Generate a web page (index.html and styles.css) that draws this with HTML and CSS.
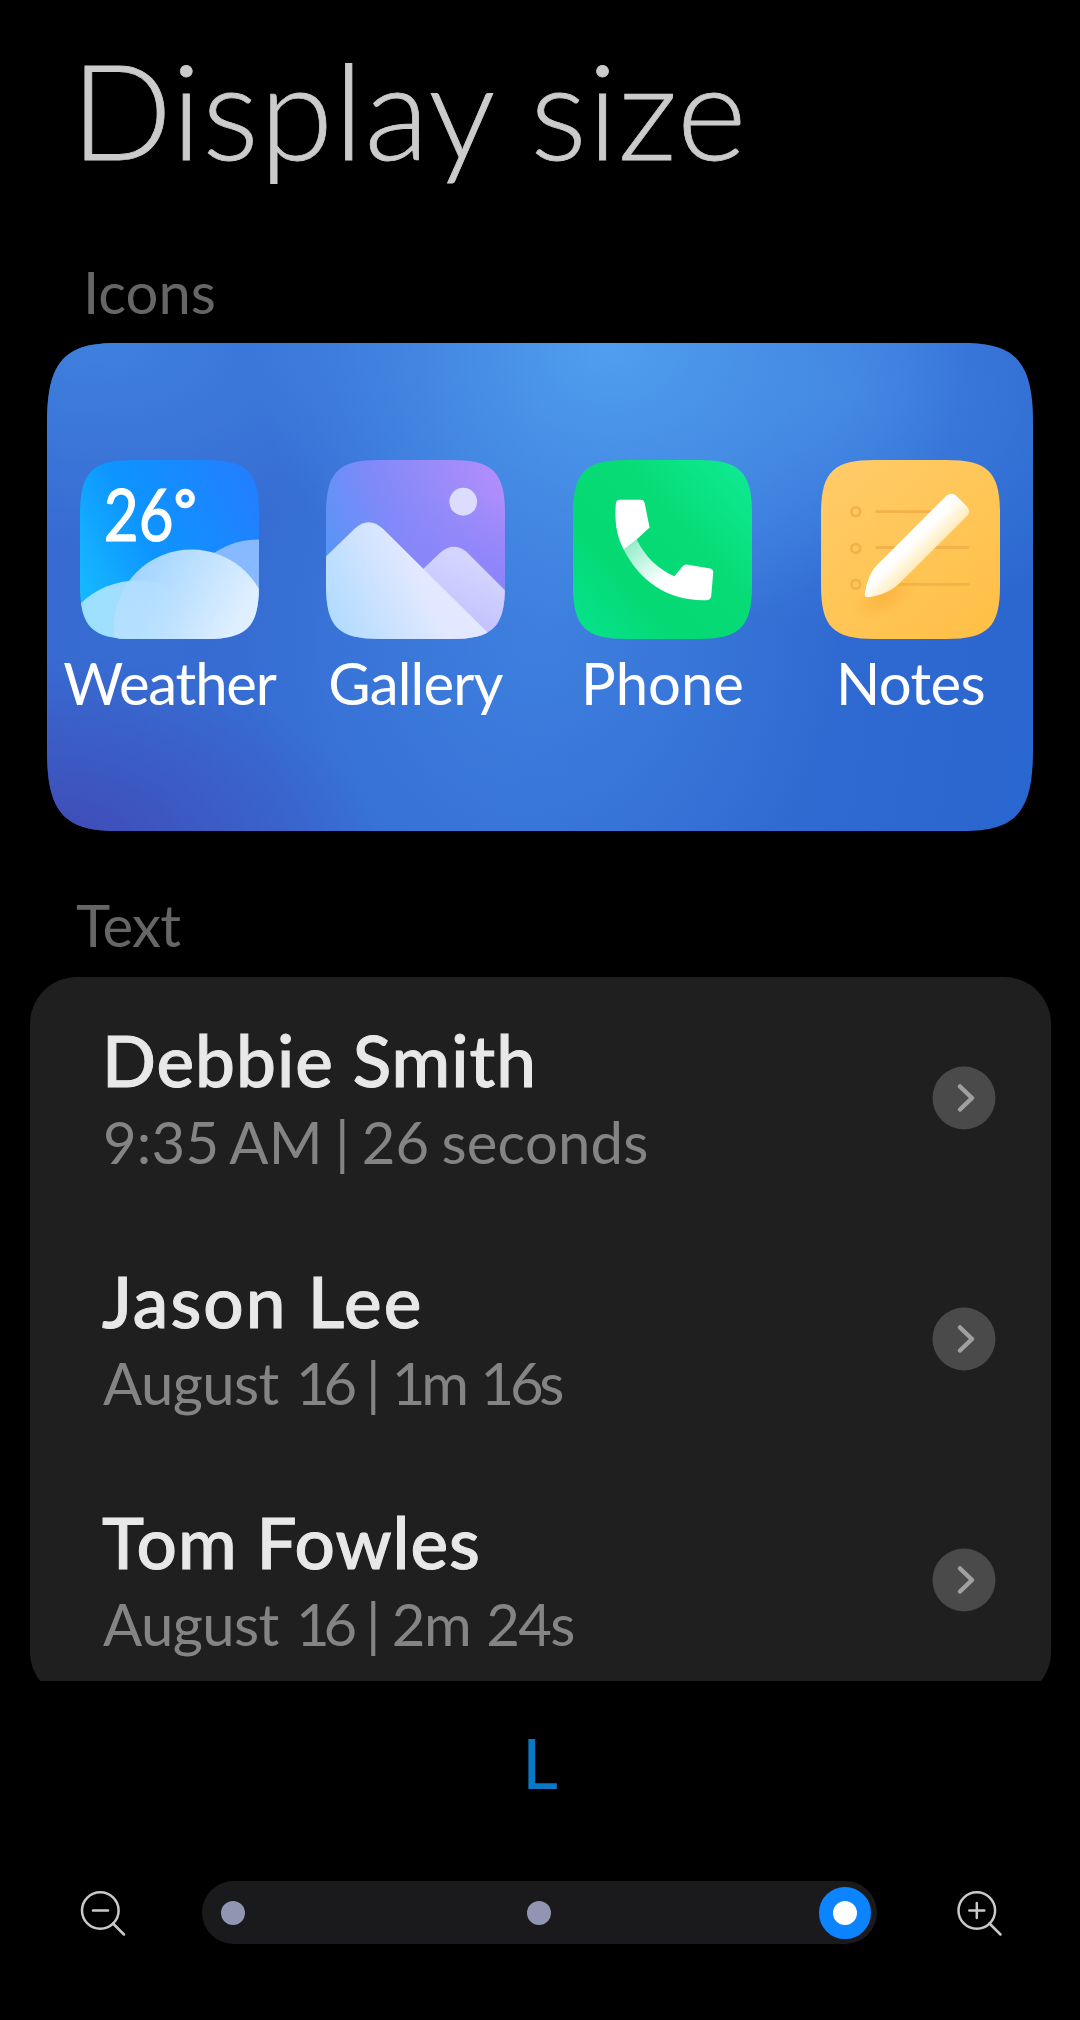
FILE: index.html
```html
<!DOCTYPE html>
<html lang="en">
<head>
    <meta charset="UTF-8">
    <meta name="viewport" content="width=device-width, initial-scale=1.0">
    <title>Display size</title>
    <link rel="stylesheet" href="styles.css">
</head>
<body>
    <h1 class="title">Display size</h1>

    <!-- Icons preview -->
    <h2 class="section-label">Icons</h2>
    <div class="icon-card">
        <div class="app">
            <svg class="app-icon" viewBox="0 0 180 180">
                <defs>
                    <linearGradient id="sky" x1="0" y1="0.8" x2="1" y2="0.3">
                        <stop offset="0" stop-color="#17bbff"/>
                        <stop offset="0.45" stop-color="#0d94ff"/>
                        <stop offset="1" stop-color="#2180ff"/>
                    </linearGradient>
                    <linearGradient id="cloudMain" x1="0.1" y1="0.2" x2="0.75" y2="0.55">
                        <stop offset="0" stop-color="#a2d4ff"/>
                        <stop offset="1" stop-color="#deefff"/>
                    </linearGradient>
                    <linearGradient id="cloudLeft" x1="0" y1="0" x2="1" y2="0">
                        <stop offset="0" stop-color="#9be0ff"/>
                        <stop offset="1" stop-color="#a8dcff"/>
                    </linearGradient>
                    <linearGradient id="cloudFade" x1="0" y1="0" x2="1" y2="0">
                        <stop offset="0.2" stop-color="#b9e3ff"/>
                        <stop offset="0.85" stop-color="#b9e3ff" stop-opacity="0"/>
                    </linearGradient>
                    <clipPath id="cloudClip"><circle cx="112" cy="168" r="78"/></clipPath>
                </defs>
                <rect width="180" height="180" fill="url(#sky)"/>
                <circle cx="179" cy="159" r="79" fill="#86b9ff"/>
                <circle cx="58" cy="203" r="82" fill="url(#cloudLeft)"/>
                <circle cx="112" cy="168" r="78" fill="url(#cloudMain)"/>
                <circle cx="58" cy="203" r="82" fill="url(#cloudFade)" clip-path="url(#cloudClip)"/>
                <text class="temp" x="24" y="81" textLength="70" lengthAdjust="spacingAndGlyphs">26</text>
                <text class="temp degree" x="95" y="68">°</text>
            </svg>
            <span class="app-name tight">Weather</span>
        </div>
        <div class="app">
            <svg class="app-icon" viewBox="0 0 180 180">
                <defs>
                    <linearGradient id="dusk" x1="0" y1="0.6" x2="1" y2="0.2">
                        <stop offset="0" stop-color="#5596f6"/>
                        <stop offset="0.4" stop-color="#8089f8"/>
                        <stop offset="1" stop-color="#b08dfb"/>
                    </linearGradient>
                    <linearGradient id="duskLow" x1="0" y1="0" x2="0" y2="1">
                        <stop offset="0.2" stop-color="#8a84fb" stop-opacity="0"/>
                        <stop offset="0.7" stop-color="#8a84fb"/>
                    </linearGradient>
                    <linearGradient id="hill" x1="0" y1="0.8" x2="0.6" y2="0.6">
                        <stop offset="0" stop-color="#b0dbff"/>
                        <stop offset="1" stop-color="#e2e8ff"/>
                    </linearGradient>
                    <linearGradient id="hillBack" x1="0.7" y1="0.2" x2="0.4" y2="0.9">
                        <stop offset="0" stop-color="#d3d5ff"/>
                        <stop offset="1" stop-color="#bfbffe"/>
                    </linearGradient>
                </defs>
                <rect width="180" height="180" fill="url(#dusk)"/>
                <rect x="60" width="120" height="180" fill="url(#duskLow)"/>
                <circle cx="138" cy="42" r="14" fill="#dcdcff"/>
                <path d="M90 117L115 93Q128 82 141 92L180 131V180H90Z" fill="url(#hillBack)"/>
                <path d="M0 97L29 69Q43 56 57 69L160 171L168 180H0Z" fill="url(#hill)"/>
            </svg>
            <span class="app-name gallery">Gallery</span>
        </div>
        <div class="app">
            <svg class="app-icon" viewBox="0 0 180 180">
                <defs>
                    <linearGradient id="green" x1="1" y1="0.1" x2="0.1" y2="0.9">
                        <stop offset="0" stop-color="#0eea92"/>
                        <stop offset="0.4" stop-color="#07db75"/>
                        <stop offset="0.75" stop-color="#05d974"/>
                        <stop offset="1" stop-color="#06e087"/>
                    </linearGradient>
                    <linearGradient id="handle" gradientUnits="userSpaceOnUse" x1="56" y1="86" x2="88" y2="122">
                        <stop offset="0" stop-color="#94edca"/>
                        <stop offset="1" stop-color="#ffffff"/>
                    </linearGradient>
                </defs>
                <rect width="180" height="180" fill="url(#green)"/>
                <path d="M51 90L64 80C73 98 86 110 102 117L110 107Q112 105 114 105L138 109Q141 110 141 113L139 137Q138 141 134 141C96 142 67 122 51 90Z" fill="url(#handle)"/>
                <path d="M47 40H68Q71 40 72 43L77 68L64 80L51 90C43 75 42 60 43 45Q43 40 47 40Z" fill="#ffffff"/>
            </svg>
            <span class="app-name">Phone</span>
        </div>
        <div class="app">
            <svg class="app-icon" viewBox="0 0 180 180">
                <defs>
                    <linearGradient id="paper" x1="0" y1="0" x2="0.8" y2="1">
                        <stop offset="0" stop-color="#ffcc69"/>
                        <stop offset="1" stop-color="#ffc048"/>
                    </linearGradient>
                    <linearGradient id="pencil" gradientUnits="userSpaceOnUse" x1="84" y1="78" x2="106" y2="100">
                        <stop offset="0.3" stop-color="#ffffff"/>
                        <stop offset="1" stop-color="#ffeab5"/>
                    </linearGradient>
                    <radialGradient id="shade">
                        <stop offset="0" stop-color="#f8ab35" stop-opacity="0.6"/>
                        <stop offset="1" stop-color="#f8ab35" stop-opacity="0"/>
                    </radialGradient>
                </defs>
                <rect width="180" height="180" fill="url(#paper)"/>
                <g fill="none" stroke="#f4b04a" stroke-width="2.8" stroke-linecap="round">
                    <circle cx="35" cy="52" r="4.4"/>
                    <circle cx="35" cy="89" r="4.4"/>
                    <circle cx="35" cy="125" r="4.4"/>
                    <path d="M56 52H120M56 88H148M56 125H148"/>
                </g>
                <ellipse cx="64" cy="137" rx="36" ry="18" fill="url(#shade)" transform="rotate(-30 64 137)"/>
                <path d="M126 36Q131 32 136 36L147 47Q151 52 147 56L82 121Q68 136 47 138Q44 138 44 135Q47 114 58 104Z" fill="url(#pencil)"/>
                <path d="M44 137Q47 114 58 104L66 97Q71 100 67 105Z" fill="#ffffff"/>
            </svg>
            <span class="app-name notes">Notes</span>
        </div>
    </div>

    <!-- Text preview -->
    <h2 class="section-label text-label">Text</h2>
    <div class="list-window">
        <ul class="list">
            <li class="row">
                <div class="row-text">
                    <div class="name">Debbie Smith</div>
                    <div class="detail">9:35 AM | 26 seconds</div>
                </div>
                <svg class="chevron" viewBox="0 0 64 64"><circle cx="32" cy="32" r="31.5"/><path d="M28 20.5L40 32L28 43.5"/></svg>
            </li>
            <li class="row">
                <div class="row-text">
                    <div class="name name-wide">Jason Lee</div>
                    <div class="detail date">August <span class="day">16 |</span> <span class="length-one">1m 16s</span></div>
                </div>
                <svg class="chevron" viewBox="0 0 64 64"><circle cx="32" cy="32" r="31.5"/><path d="M28 20.5L40 32L28 43.5"/></svg>
            </li>
            <li class="row">
                <div class="row-text">
                    <div class="name">Tom Fowles</div>
                    <div class="detail date">August <span class="day">16 |</span> <span class="length-two">2m 24s</span></div>
                </div>
                <svg class="chevron" viewBox="0 0 64 64"><circle cx="32" cy="32" r="31.5"/><path d="M28 20.5L40 32L28 43.5"/></svg>
            </li>
        </ul>
    </div>

    <!-- Size slider -->
    <div class="size-name">L</div>
    <div class="slider">
        <svg class="zoom" viewBox="0 0 50 50"><circle cx="22.3" cy="22.5" r="18.3"/><path d="M15 22.5H30M35 35.5L46 46.5"/></svg>
        <div class="track">
            <span class="dot"></span>
            <span class="dot"></span>
            <span class="dot thumb"></span>
        </div>
        <svg class="zoom" viewBox="0 0 50 50"><circle cx="22.8" cy="22.5" r="18.3"/><path d="M15.3 22.5H30.3M22.8 15V30M35.5 35.5L46.5 46.5"/></svg>
    </div>
</body>
</html>
```
FILE: styles.css
```css
body {
    margin: 0;
    padding-top: 29px;
    background: #000;
    font-family: Lato, "Open Sans", sans-serif;
    overflow: hidden;
}
.title {
    margin: 0 0 68px 71px;
    font-size: 133px;
    font-weight: 300;
    line-height: 160px;
    letter-spacing: 1px;
    color: #cbcbcb;
    -webkit-text-stroke: 0.8px #cbcbcb;
}
.section-label {
    margin: 0 0 16px 83px;
    font-size: 58px;
    font-weight: 400;
    line-height: 70px;
    color: #666;
}
.text-label {
    margin: 59px 0 17px 76px;
    letter-spacing: -0.7px;
}

/* Icons preview */
.icon-card {
    display: grid;
    grid-template-columns: 245px 247px 247px 249px;
    box-sizing: border-box;
    width: 986px;
    height: 488px;
    margin-left: 47px;
    padding-top: 117px;
    clip-path: path("M0 80C0 18 18 0 70 0H916C968 0 986 18 986 80V408C986 470 968 488 916 488H70C18 488 0 470 0 408Z");
    background:
        radial-gradient(ellipse 330px 200px at 0% 105%, #4148b4 0%, rgba(65, 72, 180, 0) 100%),
        radial-gradient(ellipse 360px 300px at 57% 0%, #509fef 0%, rgba(80, 159, 239, 0) 100%),
        radial-gradient(ellipse 330px 200px at 5% 0%, #3f80de 0%, rgba(63, 128, 222, 0) 100%),
        radial-gradient(ellipse 300px 330px at 50% 60%, #3d7fde 0%, rgba(61, 127, 222, 0) 100%),
        radial-gradient(ellipse 330px 240px at 80% 10%, #3f80de 0%, rgba(63, 128, 222, 0) 100%),
        linear-gradient(100deg, #376bd1 0%, #366fd5 50%, #2a66cf 100%);
}
.app {
    display: flex;
    flex-direction: column;
    align-items: center;
}
.app-icon {
    width: 179px;
    height: 179px;
    clip-path: path("M0 54C0 12 12 0 54 0H125C167 0 179 12 179 54V125C179 167 167 179 125 179H54C12 179 0 167 0 125Z");
}
.app-name {
    margin-top: 9px;
    font-size: 58px;
    line-height: 70px;
    color: #fff;
}
.tight {
    letter-spacing: -1.2px;
}
.gallery {
    letter-spacing: -0.8px;
}
.notes {
    letter-spacing: -0.6px;
}
.temp {
    font-size: 73px;
    fill: #fff;
    stroke: #fff;
    stroke-width: 1.2px;
}
.degree {
    font-size: 52px;
    stroke-width: 2.4px;
}

/* Text preview, the list is cut off at the bottom */
.list-window {
    width: 1021px;
    height: 704px;
    margin-left: 30px;
    overflow: hidden;
}
.list {
    margin: 0;
    padding: 0;
    height: 722px;
    border-radius: 47px;
    background: #1f1f1f;
    list-style: none;
}
.row {
    display: flex;
    justify-content: space-between;
    align-items: center;
    height: 241px;
    padding: 0 55px 0 72px;
}
.name {
    font-size: 71px;
    font-weight: 500;
    line-height: 84px;
    letter-spacing: 1px;
    color: #e8e8e8;
    -webkit-text-stroke: 1px #e8e8e8;
}
.name-wide {
    letter-spacing: 2.1px;
}
.detail {
    margin: 5px 0 0 1px;
    font-size: 58px;
    line-height: 70px;
    letter-spacing: 0.2px;
    word-spacing: -3px;
    color: #848484;
}
.date {
    letter-spacing: -0.6px;
    word-spacing: 3px;
}
.day {
    letter-spacing: -6px;
    word-spacing: 6px;
}
.length-one {
    letter-spacing: -4.2px;
    word-spacing: 5px;
}
.length-two {
    letter-spacing: -1.6px;
}
.chevron {
    width: 64px;
    height: 64px;
}
.chevron circle {
    fill: #4a4a4a;
}
.chevron path {
    fill: none;
    stroke: #a0a0a0;
    stroke-width: 4.5;
    stroke-linecap: round;
    stroke-linejoin: round;
}

/* Size slider */
.size-name {
    margin-top: 39px;
    font-size: 70px;
    line-height: 84px;
    text-align: center;
    color: #0a78c6;
}
.slider {
    display: flex;
    align-items: center;
    margin-top: 77px;
    padding-left: 78px;
}
.zoom {
    width: 50px;
    height: 50px;
    fill: none;
    stroke: #c9c9c9;
    stroke-width: 2.5;
    stroke-linecap: round;
}
.track {
    display: flex;
    justify-content: space-between;
    align-items: center;
    box-sizing: border-box;
    width: 675px;
    height: 63px;
    margin: 0 77px 0 74px;
    padding: 0 20px 0 19px;
    border-radius: 32px;
    background: #1a1a1c;
}
.dot {
    width: 24px;
    height: 24px;
    border-radius: 50%;
    background: #9095b2;
}
.thumb {
    margin: -14px;
    border: 14px solid #0d84ff;
    background: #fff;
}
```
